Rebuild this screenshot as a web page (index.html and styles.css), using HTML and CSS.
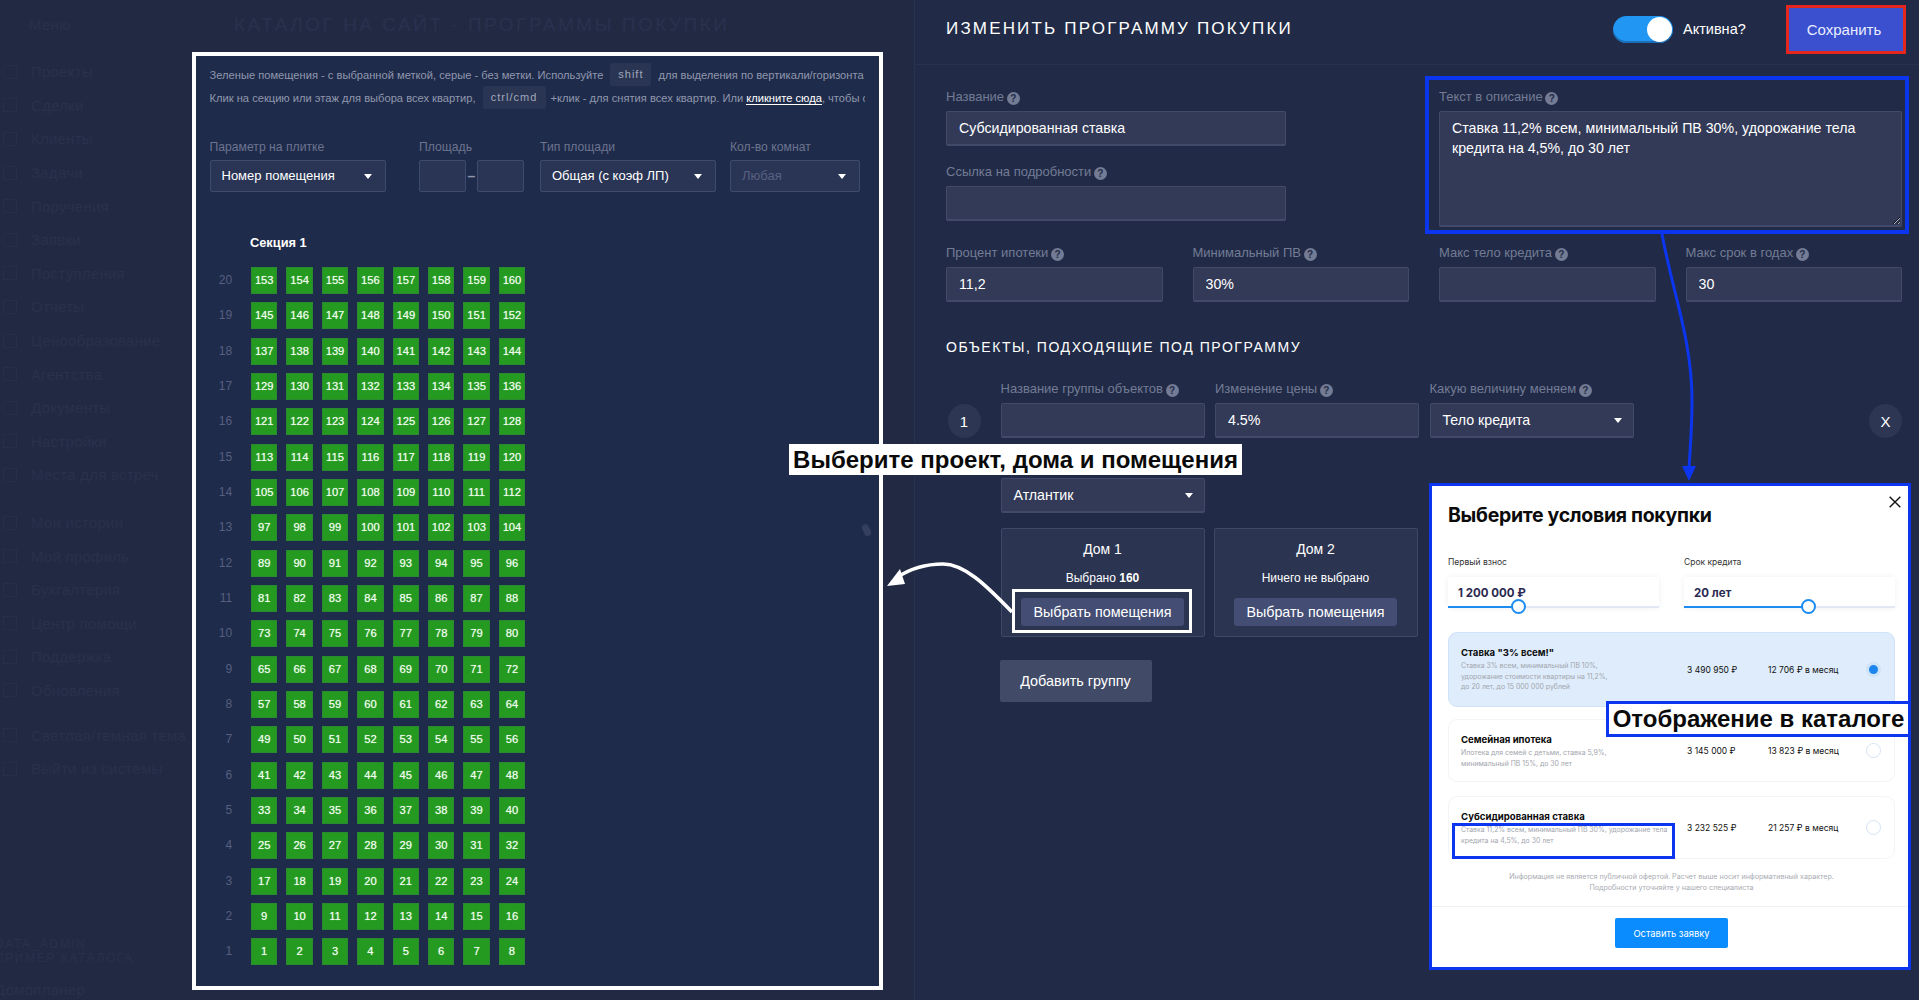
FILE: index.html
```html
<!DOCTYPE html>
<html lang="ru">
<head>
<meta charset="utf-8">
<title>Изменить программу покупки</title>
<link rel="stylesheet" href="styles.css">
</head>
<body>
<div class="page">
  <aside class="sidebar">
    <div class="brand">Меню</div>
    <nav class="nav">
      <a>Проекты</a><a>Сделки</a><a>Клиенты</a><a>Задачи</a><a>Поручения</a><a>Заявки</a><a>Поступления</a><a>Отчеты</a><a>Ценообразование</a><a>Агентства</a><a>Документы</a><a>Настройки</a><a>Места для встреч</a>
    </nav>
    <nav class="nav nav-second">
      <a>Мои истории</a><a>Мой профиль</a><a>Бухгалтерия</a><a>Центр помощи</a><a>Поддержка</a><a>Обновления</a>
    </nav>
    <nav class="nav nav-third">
      <a>Светлая/темная тема</a><a>Выйти из системы</a>
    </nav>
    <div class="side-foot">
      <div class="side-user">DATA_ADMIN<br>ПРИМЕР КАТАЛОГА</div>
      <div class="side-logo">Домопланер</div>
    </div>
  </aside>
  <main class="main">
    <h1 class="main-title">КАТАЛОГ НА САЙТ - ПРОГРАММЫ ПОКУПКИ</h1>
  </main>
  <section class="drawer">
    <header class="drawer-head">
      <h2 class="drawer-title">ИЗМЕНИТЬ ПРОГРАММУ ПОКУПКИ</h2>
      <span class="toggle"><span class="knob"></span></span>
      <span class="toggle-label">Активна?</span>
      <button class="save">Сохранить</button>
    </header>
    <div class="drawer-body">
      <div class="form-grid">
        <div class="span2">
          <div class="label">Название <i class="help">?</i></div>
          <input class="input input-wide" value="Субсидированная ставка">
          <div class="label label-next">Ссылка на подробности <i class="help">?</i></div>
          <input class="input input-wide" value="">
        </div>
        <div class="span2">
          <div class="label">Текст в описание <i class="help">?</i></div>
          <textarea class="input textarea">Ставка 11,2% всем, минимальный ПВ 30%, удорожание тела кредита на 4,5%, до 30 лет</textarea>
        </div>
        <div><div class="label">Процент ипотеки <i class="help">?</i></div><input class="input" value="11,2"></div>
        <div><div class="label">Минимальный ПВ <i class="help">?</i></div><input class="input" value="30%"></div>
        <div><div class="label">Макс тело кредита <i class="help">?</i></div><input class="input" value=""></div>
        <div><div class="label">Макс срок в годах <i class="help">?</i></div><input class="input" value="30"></div>
      </div>
      <h3 class="section-title">ОБЪЕКТЫ, ПОДХОДЯЩИЕ ПОД ПРОГРАММУ</h3>
      <div class="group-row">
        <span class="round round-num">1</span>
        <div class="gfield"><div class="label">Название группы объектов <i class="help">?</i></div><input class="input" value=""></div>
        <div class="gfield"><div class="label">Изменение цены <i class="help">?</i></div><input class="input" value="4.5%"></div>
        <div class="gfield"><div class="label">Какую величину меняем <i class="help">?</i></div><div class="input select"><span>Тело кредита</span></div></div>
        <span class="round round-x">X</span>
      </div>
      <div class="group-body">
        <div class="input select project"><span>Атлантик</span></div>
        <div class="houses">
          <div class="house">
            <div class="house-name">Дом 1</div>
            <div class="house-state">Выбрано <b>160</b></div>
            <button class="pick">Выбрать помещения</button>
          </div>
          <div class="house">
            <div class="house-name">Дом 2</div>
            <div class="house-state">Ничего не выбрано</div>
            <button class="pick">Выбрать помещения</button>
          </div>
        </div>
      </div>
      <button class="add-group">Добавить группу</button>
    </div>
  </section>
</div>

<section class="picker">
  <p class="hint"><span>Зеленые помещения - с выбранной меткой, серые - без метки. Используйте</span><kbd class="key key-shift">shift</kbd><span>для выделения по вертикали/горизонта</span></p>
  <p class="hint"><span>Клик на секцию или этаж для выбора всех квартир,</span><kbd class="key key-ctrl">ctrl/cmd</kbd><span>+клик - для снятия всех квартир. Или&nbsp;<a class="link">кликните сюда</a>, чтобы с</span></p>
  <div class="filters">
    <div class="filter f-param"><div class="f-label">Параметр на плитке</div><div class="fbox fselect">Номер помещения</div></div>
    <div class="filter f-area"><div class="f-label">Площадь</div><div class="range"><span class="fbox"></span><span class="dash">–</span><span class="fbox"></span></div></div>
    <div class="filter f-type"><div class="f-label">Тип площади</div><div class="fbox fselect">Общая (с коэф ЛП)</div></div>
    <div class="filter f-rooms"><div class="f-label">Кол-во комнат</div><div class="fbox fselect muted">Любая</div></div>
  </div>
  <div class="section-name">Секция 1</div>
  <div class="floors">
    <span class="fl">20</span><span class="u">153</span><span class="u">154</span><span class="u">155</span><span class="u">156</span><span class="u">157</span><span class="u">158</span><span class="u">159</span><span class="u">160</span>
    <span class="fl">19</span><span class="u">145</span><span class="u">146</span><span class="u">147</span><span class="u">148</span><span class="u">149</span><span class="u">150</span><span class="u">151</span><span class="u">152</span>
    <span class="fl">18</span><span class="u">137</span><span class="u">138</span><span class="u">139</span><span class="u">140</span><span class="u">141</span><span class="u">142</span><span class="u">143</span><span class="u">144</span>
    <span class="fl">17</span><span class="u">129</span><span class="u">130</span><span class="u">131</span><span class="u">132</span><span class="u">133</span><span class="u">134</span><span class="u">135</span><span class="u">136</span>
    <span class="fl">16</span><span class="u">121</span><span class="u">122</span><span class="u">123</span><span class="u">124</span><span class="u">125</span><span class="u">126</span><span class="u">127</span><span class="u">128</span>
    <span class="fl">15</span><span class="u">113</span><span class="u">114</span><span class="u">115</span><span class="u">116</span><span class="u">117</span><span class="u">118</span><span class="u">119</span><span class="u">120</span>
    <span class="fl">14</span><span class="u">105</span><span class="u">106</span><span class="u">107</span><span class="u">108</span><span class="u">109</span><span class="u">110</span><span class="u">111</span><span class="u">112</span>
    <span class="fl">13</span><span class="u">97</span><span class="u">98</span><span class="u">99</span><span class="u">100</span><span class="u">101</span><span class="u">102</span><span class="u">103</span><span class="u">104</span>
    <span class="fl">12</span><span class="u">89</span><span class="u">90</span><span class="u">91</span><span class="u">92</span><span class="u">93</span><span class="u">94</span><span class="u">95</span><span class="u">96</span>
    <span class="fl">11</span><span class="u">81</span><span class="u">82</span><span class="u">83</span><span class="u">84</span><span class="u">85</span><span class="u">86</span><span class="u">87</span><span class="u">88</span>
    <span class="fl">10</span><span class="u">73</span><span class="u">74</span><span class="u">75</span><span class="u">76</span><span class="u">77</span><span class="u">78</span><span class="u">79</span><span class="u">80</span>
    <span class="fl">9</span><span class="u">65</span><span class="u">66</span><span class="u">67</span><span class="u">68</span><span class="u">69</span><span class="u">70</span><span class="u">71</span><span class="u">72</span>
    <span class="fl">8</span><span class="u">57</span><span class="u">58</span><span class="u">59</span><span class="u">60</span><span class="u">61</span><span class="u">62</span><span class="u">63</span><span class="u">64</span>
    <span class="fl">7</span><span class="u">49</span><span class="u">50</span><span class="u">51</span><span class="u">52</span><span class="u">53</span><span class="u">54</span><span class="u">55</span><span class="u">56</span>
    <span class="fl">6</span><span class="u">41</span><span class="u">42</span><span class="u">43</span><span class="u">44</span><span class="u">45</span><span class="u">46</span><span class="u">47</span><span class="u">48</span>
    <span class="fl">5</span><span class="u">33</span><span class="u">34</span><span class="u">35</span><span class="u">36</span><span class="u">37</span><span class="u">38</span><span class="u">39</span><span class="u">40</span>
    <span class="fl">4</span><span class="u">25</span><span class="u">26</span><span class="u">27</span><span class="u">28</span><span class="u">29</span><span class="u">30</span><span class="u">31</span><span class="u">32</span>
    <span class="fl">3</span><span class="u">17</span><span class="u">18</span><span class="u">19</span><span class="u">20</span><span class="u">21</span><span class="u">22</span><span class="u">23</span><span class="u">24</span>
    <span class="fl">2</span><span class="u">9</span><span class="u">10</span><span class="u">11</span><span class="u">12</span><span class="u">13</span><span class="u">14</span><span class="u">15</span><span class="u">16</span>
    <span class="fl">1</span><span class="u">1</span><span class="u">2</span><span class="u">3</span><span class="u">4</span><span class="u">5</span><span class="u">6</span><span class="u">7</span><span class="u">8</span>
  </div>
  <span class="grip"></span>
</section>

<section class="catalog">
  <h4 class="cat-title">Выберите условия покупки</h4>
  <svg class="cat-close" viewBox="0 0 12 12" aria-hidden="true"><path d="M.7.7l10.6 10.6M11.3.7L.7 11.3"/></svg>
  <div class="cat-sliders">
    <div class="cat-slider">
      <div class="cat-label">Первый взнос</div>
      <div class="cat-input">1 200 000 ₽<span class="fill fill-a"></span><span class="thumb thumb-a"></span></div>
    </div>
    <div class="cat-slider">
      <div class="cat-label">Срок кредита</div>
      <div class="cat-input">20 лет<span class="fill fill-b"></span><span class="thumb thumb-b"></span></div>
    </div>
  </div>
  <div class="offer offer-active">
    <div class="offer-text"><b>Ставка "3% всем!"</b><p>Ставка 3% всем, минимальный ПВ 10%,<br>удорожание стоимости квартиры на 11,2%,<br>до 20 лет, до 15 000 000 рублей</p></div>
    <span class="price">3 490 950 ₽</span><span class="price">12 706 ₽ в месяц</span><span class="radio radio-on"></span>
  </div>
  <div class="offer offer-2">
    <div class="offer-text"><b>Семейная ипотека</b><p>Ипотека для семей с детьми, ставка 5,9%,<br>минимальный ПВ 15%, до 30 лет</p></div>
    <span class="price">3 145 000 ₽</span><span class="price">13 823 ₽ в месяц</span><span class="radio"></span>
  </div>
  <div class="offer offer-3">
    <div class="offer-text"><b>Субсидированная ставка</b><p>Ставка 11,2% всем, минимальный ПВ 30%, удорожание тела<br>кредита на 4,5%, до 30 лет</p></div>
    <span class="price">3 232 525 ₽</span><span class="price">21 257 ₽ в месяц</span><span class="radio"></span>
  </div>
  <p class="cat-note">Информация не является публичной офертой. Расчет выше носит информативный характер.<br>Подробности уточняйте у нашего специалиста</p>
  <div class="cat-foot"><button class="cat-btn">Оставить заявку</button></div>
</section>

<div class="mark mark-text"></div>
<div class="mark mark-pick"></div>
<div class="mark mark-desc"></div>
<div class="tag tag-project">Выберите проект, дома и помещения</div>
<div class="tag tag-catalog">Отображение в каталоге</div>
<svg class="arrows" viewBox="0 0 1919 1000" aria-hidden="true">
  <path class="arrow-white" d="M1012 612C985 584 964 564 943 564C924 564 908 570 896 578"/>
  <path class="head-white" d="M887 586L900 569L905 584Z"/>
  <path class="arrow-blue" d="M1662 234C1672 290 1692 340 1692 400C1692 430 1690 450 1689 468"/>
  <path class="head-blue" d="M1689 481L1682 466L1696 466Z"/>
</svg>
</body>
</html>
```
FILE: styles.css
```css
* { box-sizing: border-box; }
html, body { margin: 0; height: 1000px; overflow: hidden; }
body { position: relative; background: #222a43; font-family: "Liberation Sans", Arial, sans-serif; color: #fff; }
h1, h2, h3, h4, p { margin: 0; font-weight: 400; }
button { font-family: inherit; border: 0; cursor: pointer; }

.page { display: flex; height: 1000px; }

/* dimmed sidebar */
.sidebar { width: 192px; flex: none; display: flex; flex-direction: column; color: #29314c; font-size: 15px; letter-spacing: .25px; overflow: hidden; padding-left: 29px; }
.brand { height: 50px; line-height: 50px; }
.nav { display: flex; flex-direction: column; margin-top: 5px; }
.nav a { display: flex; align-items: center; height: 33.6px; white-space: nowrap; }
.nav a::before { content: ""; flex: none; width: 12px; height: 12px; margin: 0 14px 0 -26px; border: 1px solid #272f48; }
.nav-second { margin-top: 14px; }
.nav-third { margin-top: 11px; }
.side-foot { margin-top: auto; margin-left: -34px; }
.side-user { font-size: 12px; line-height: 14px; letter-spacing: 1.6px; }
.side-logo { font-size: 15px; margin-top: 16px; margin-bottom: 1px; height: 18px; }

.main { flex: 1; min-width: 0; padding-left: 42px; }
.main-title { font-size: 19px; line-height: 50px; letter-spacing: 2.5px; color: #29314e; white-space: nowrap; }

/* right drawer */
.drawer { width: 1005px; flex: none; background: #212b47; border-left: 1px solid #283250; }
.drawer-head { height: 65px; display: flex; align-items: center; padding: 0 13px 6px 31px; border-bottom: 1px solid #283250; }
.drawer-title { font-size: 17px; letter-spacing: 2.17px; white-space: nowrap; }
.toggle { margin-left: auto; width: 60px; height: 27px; border-radius: 14px; background: #2196f3; box-shadow: inset 0 -2px 0 #1b6fb8; display: flex; align-items: center; justify-content: flex-end; padding-right: 1px; }
.knob { width: 25px; height: 25px; border-radius: 50%; background: #fff; }
.toggle-label { margin-left: 10px; font-size: 14.5px; width: 103px; }
.save { width: 120px; height: 49px; padding: 0 4px 0 0; background: #3a50cf; color: #e9edff; font-size: 15px; border: 3px solid #e4261c; }

.drawer-body { padding: 24px 17px 0 31px; }
.form-grid { display: grid; grid-template-columns: repeat(4, 216.5px); column-gap: 30px; row-gap: 18px; }
.span2 { grid-column: span 2; }
.label { height: 16px; line-height: 16px; margin-bottom: 6px; font-size: 13px; color: #737b95; white-space: nowrap; }
.label-next { margin-top: 18px; }
.help { display: inline-block; width: 13px; height: 13px; margin-left: -1px; border-radius: 50%; background: #737b95; color: #212b47; font: 700 10px/13px "Liberation Sans", sans-serif; text-align: center; vertical-align: -1px; }
.input { display: block; width: 100%; height: 35px; padding: 0 12px; background: #333a58; border: 1px solid #434a69; border-bottom-width: 2px; border-radius: 2px; color: #fff; font: 14.2px "Liberation Sans", sans-serif; outline: 0; }
.input-wide { width: 340px; }
.textarea { height: 116px; padding: 6px 12px; line-height: 20px; }
.section-title { margin-top: 35px; font-size: 14px; line-height: 20px; letter-spacing: 1.55px; }

.group-row { display: flex; align-items: flex-end; margin-top: 24px; padding-left: 1.5px; }
.round { width: 33px; height: 34px; border-radius: 50%; background: #2d3653; display: flex; align-items: center; justify-content: center; font-size: 15px; flex: none; }
.round-num { margin-right: 20px; }
.gfield { width: 204px; margin-right: 10.5px; }
.round-x { margin-left: auto; }
.select { display: flex; align-items: center; position: relative; }
.select::after { content: ""; position: absolute; right: 11px; top: 14px; border: 4px solid transparent; border-top: 5px solid #fff; border-bottom: 0; }
.group-body { margin-left: 54.5px; }
.project { width: 204px; margin-top: 40px; }
.houses { display: flex; gap: 9px; margin-top: 15px; }
.house { width: 204px; height: 109px; padding-top: 11px; background: #2b3552; border: 1px solid #3f4866; border-radius: 2px; display: flex; flex-direction: column; align-items: center; }
.house-name { font-size: 14px; line-height: 18px; }
.house-state { font-size: 12px; line-height: 16px; margin-top: 12px; }
.pick { width: 163px; height: 28px; margin-top: 12px; background: #444e75; color: #fff; font-size: 14.3px; border-radius: 3px; }
.add-group { display: block; width: 152px; height: 42px; margin-top: 23px; margin-left: 53.5px; background: #414a66; color: #fff; font-size: 14.4px; border-radius: 2px; }

/* floor picker pasted over the page */
.picker { position: absolute; left: 192px; top: 52px; width: 691px; height: 938px; background: #1f2b4a; border: 4px solid #fff; padding: 7px 14px 0 13.5px; }
.hint { height: 23px; display: flex; align-items: center; white-space: nowrap; overflow: hidden; font-size: 11.15px; color: #8f97ae; }
.key { height: 23px; background: #2a3553; border-radius: 2px; font: 11px/23px "Liberation Sans", sans-serif; letter-spacing: 1px; text-align: center; color: #a0a8bc; flex: none; }
.key-shift { width: 41px; margin: 0 7px; }
.key-ctrl { width: 63px; margin: 0 5px 0 7px; }
.link { color: #fff; border-bottom: 1px solid #fff; }
.filters { display: flex; margin-top: 30px; }
.f-label { height: 16px; line-height: 16px; font-size: 12.2px; color: #6c7490; margin-bottom: 5px; white-space: nowrap; }
.filter { flex: none; }
.f-param { width: 176.5px; margin-right: 33px; }
.f-area { width: 105px; margin-right: 16px; }
.f-type { width: 176px; margin-right: 14px; }
.f-rooms { width: 130px; }
.fbox { display: block; height: 32px; background: #2a3556; border: 1px solid #3f4b6e; border-radius: 2px; }
.fselect { position: relative; font-size: 13px; line-height: 30px; padding-left: 11px; }
.fselect::after { content: ""; position: absolute; right: 13px; top: 13px; border: 4px solid transparent; border-top: 5px solid #fff; border-bottom: 0; }
.muted { color: #576080; }
.range { display: flex; align-items: center; }
.range .fbox { width: 47px; }
.dash { width: 12px; text-align: center; font-size: 14px; font-weight: 700; color: #8f97ae; }
.section-name { margin: 43px 0 16px 40.5px; height: 16px; line-height: 16px; font-size: 12.8px; font-weight: 700; }
.floors { display: grid; grid-template-columns: 32.6px repeat(8, 26.5px); grid-auto-rows: 27px; column-gap: 8.9px; row-gap: 8.33px; }
.fl { padding-right: 10px; text-align: right; font-size: 12px; line-height: 27px; color: #565f80; }
.u { background: #249a20; border: 1px solid #2a8a30; text-align: center; font-size: 11.2px; line-height: 25px; color: #f2fff0; text-shadow: 0 0 1px rgba(255, 255, 255, .6); }
.grip { position: absolute; left: 667px; top: 468px; width: 7px; height: 12px; border-radius: 3px; background: #333e60; transform: rotate(-25deg); }

/* pasted catalog screenshot */
.catalog { position: absolute; left: 1429px; top: 483px; width: 482px; height: 487px; background: #fff; border: 3px solid #0b35ee; padding: 16px 13px 0 16px; color: #0b0b0b; font-family: Inter, "Open Sans", sans-serif; }
.cat-title { font-size: 19.5px; line-height: 26px; font-weight: 700; letter-spacing: -.3px; }
.cat-close { position: absolute; right: 7px; top: 10px; width: 12px; height: 12px; fill: none; stroke: #111; stroke-width: 1.4; }
.cat-sliders { display: flex; gap: 25px; margin-top: 28px; }
.cat-slider { width: 211px; }
.cat-label { font-size: 8.5px; line-height: 12px; margin-bottom: 9px; color: #333; }
.cat-input { position: relative; height: 31px; line-height: 32px; padding-left: 10px; font-size: 11.5px; font-weight: 700; color: #2b2a52; box-shadow: 0 0 6px #eef0f6; border-bottom: 2px solid #e3e6f3; }
.fill { position: absolute; left: 0; bottom: -2px; height: 2px; background: #1c8cf0; }
.fill-a { width: 70px; }
.fill-b { width: 124px; }
.thumb { position: absolute; bottom: -8px; width: 15px; height: 15px; border-radius: 50%; background: #fff; border: 2px solid #1c8cf0; }
.thumb-a { left: 63px; }
.thumb-b { left: 117px; }
.offer { display: grid; grid-template-columns: 226px 81px 98px 17px; align-items: center; padding: 0 12px; border: 1px solid #f2f4f8; border-radius: 9px; }
.offer-active { height: 75px; margin-top: 24px; background: #deecfb; border-color: #cfe2f7; }
.offer-2 { height: 63px; margin-top: 12px; }
.offer-3 { height: 63px; margin-top: 14px; }
.offer-text { align-self: start; padding-top: 14px; }
.offer-text b { display: block; font-size: 9.6px; line-height: 12px; font-weight: 700; }
.offer-text p { font-size: 6.9px; line-height: 10.7px; color: #a3a6ae; margin-top: 2px; white-space: nowrap; }
.price { font-size: 8.5px; white-space: nowrap; color: #111; }
.radio { width: 15px; height: 15px; border-radius: 50%; border: 1px solid #d5e3f2; background: #fff; }
.radio-on { background: #1c86ee; border: 3px solid #cfe3f8; }
.cat-note { margin-top: 12px; font-size: 7.1px; line-height: 11px; color: #a8abb2; text-align: center; }
.cat-foot { margin: 13px -13px 0 -16px; padding-top: 11px; border-top: 1px solid #f1f2f5; display: flex; justify-content: center; }
.cat-btn { width: 113px; height: 30px; margin-left: 3px; background: #0a8cff; color: #fff; font-family: inherit; font-size: 9.4px; border-radius: 2px; }

/* annotations */
.mark { position: absolute; background: transparent; }
.mark-text { left: 1425px; top: 76px; width: 484px; height: 158px; border: 4px solid #0b35ee; }
.mark-pick { left: 1012px; top: 589px; width: 180px; height: 44px; border: 3px solid #fff; }
.mark-desc { left: 1452px; top: 823px; width: 223px; height: 36px; border: 3px solid #0b35ee; }
.tag { position: absolute; background: #fff; color: #0a0a0a; font-weight: 700; white-space: nowrap; display: flex; align-items: center; justify-content: center; }
.tag-project { left: 789px; top: 444px; width: 453px; height: 31px; font-size: 24px; }
.tag-catalog { left: 1606px; top: 701px; width: 305px; height: 36px; font-size: 24px; border: 3px solid #0b35ee; }
.arrows { position: absolute; left: 0; top: 0; width: 1919px; height: 1000px; pointer-events: none; }
.arrow-white { fill: none; stroke: #fff; stroke-width: 3.5; }
.head-white { fill: #fff; }
.arrow-blue { fill: none; stroke: #0b35ee; stroke-width: 3; }
.head-blue { fill: #0b35ee; }
```
